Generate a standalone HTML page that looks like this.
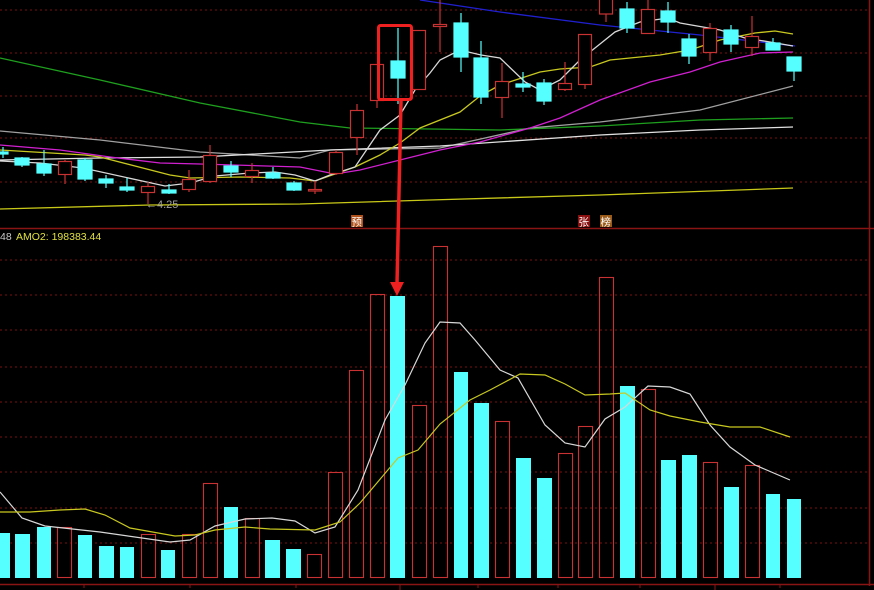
<!DOCTYPE html>
<html><head><meta charset="utf-8"><style>
html,body{margin:0;padding:0;background:#000;width:874px;height:590px;overflow:hidden}
svg{display:block}
text{font-family:"Liberation Sans","Noto Sans CJK SC",sans-serif}
</style></head><body>
<svg width="874" height="590" viewBox="0 0 874 590" xmlns="http://www.w3.org/2000/svg">
<rect width="874" height="590" fill="#000"/>
<g stroke="#7a1010" stroke-width="1" stroke-dasharray="2,3">
<line x1="0" y1="10" x2="868" y2="10"/><line x1="0" y1="53" x2="868" y2="53"/><line x1="0" y1="96" x2="868" y2="96"/><line x1="0" y1="138" x2="868" y2="138"/><line x1="0" y1="182" x2="868" y2="182"/>
<line x1="0" y1="260" x2="868" y2="260"/><line x1="0" y1="295" x2="868" y2="295"/><line x1="0" y1="330" x2="868" y2="330"/><line x1="0" y1="367" x2="868" y2="367"/><line x1="0" y1="402" x2="868" y2="402"/><line x1="0" y1="437" x2="868" y2="437"/><line x1="0" y1="472" x2="868" y2="472"/><line x1="0" y1="508" x2="868" y2="508"/><line x1="0" y1="543" x2="868" y2="543"/>
</g>
<line x1="0" y1="228.5" x2="874" y2="228.5" stroke="#8a1414" stroke-width="1.5"/>
<line x1="869.5" y1="0" x2="869.5" y2="586" stroke="#8a1414" stroke-width="1.5"/>
<line x1="0" y1="584.5" x2="874" y2="584.5" stroke="#8a1414" stroke-width="1.5"/>
<g stroke="#8a1414"><line x1="84" y1="584" x2="84" y2="588"/><line x1="190" y1="584" x2="190" y2="588"/><line x1="296" y1="584" x2="296" y2="588"/><line x1="400" y1="584" x2="400" y2="590"/><line x1="478" y1="584" x2="478" y2="588"/><line x1="558" y1="584" x2="558" y2="588"/><line x1="640" y1="584" x2="640" y2="588"/><line x1="715" y1="584" x2="715" y2="590"/><line x1="780" y1="584" x2="780" y2="588"/></g>

<!-- MA lines top -->
<g fill="none" stroke-width="1.3">
<polyline stroke="#c8c818" points="0,209 150,205 300,204 430,200 600,195 793,188"/>
<polyline stroke="#1ea01e" points="0,58 100,80 200,103 300,122 350,128 430,129 500,130 600,126 700,120 793,118"/>
<polyline stroke="#a0a0a0" points="0,131 100,140 200,152 300,158 330,150 440,148 530,128 600,122 700,110 793,86"/>
<polyline stroke="#e0e0e0" points="0,160 100,158 200,157 330,150 440,146 600,135 700,130 793,127"/>
<polyline stroke="#2020d0" points="420,0 500,12 600,25 700,35 795,46"/>
<polyline stroke="#d020d0" points="0,145 60,150 110,157 160,163 200,164 300,167 335,174 360,170 400,160 440,150 480,142 530,128 560,118 600,100 650,82 690,72 720,62 760,53 793,52"/>
<polyline stroke="#c8c820" points="0,150 85,155 100,157 170,175 190,178 240,177 290,178 315,181 335,174 355,167 380,155 400,143 420,128 460,112 480,96 500,85 540,72 560,69 590,67 610,60 630,58 660,55 690,50 720,40 755,33 775,31 793,34"/>
<polyline stroke="#d8d8d8" points="0,161 40,163 83,168 165,186 190,183 215,176 250,173 275,172 295,175 315,181 330,175 355,167 380,130 400,115 415,90 430,73 440,60 460,50 481,55 500,58 525,82 540,90 560,80 580,60 600,44 615,32 640,22 668,18 680,23 720,30 745,38 770,42 793,46"/>
</g>

<!-- candles -->
<g stroke-width="1.2">
<g stroke="#55ffff" fill="#55ffff">
<line x1="3" y1="147" x2="3" y2="158"/><rect x="0" y="152" width="8" height="2"/>
<line x1="22" y1="157" x2="22" y2="167"/><rect x="15" y="158" width="14" height="7"/>
<line x1="44" y1="150" x2="44" y2="176"/><rect x="37" y="164" width="14" height="9"/>
<line x1="85" y1="158" x2="85" y2="181"/><rect x="78" y="160" width="14" height="19"/>
<line x1="106" y1="175" x2="106" y2="188"/><rect x="99" y="179" width="14" height="4"/>
<line x1="127" y1="178" x2="127" y2="192"/><rect x="120" y="187" width="14" height="3"/>
<line x1="169" y1="184" x2="169" y2="194"/><rect x="162" y="190" width="14" height="3"/>
<line x1="231" y1="161" x2="231" y2="177"/><rect x="224" y="166" width="14" height="6"/>
<line x1="273" y1="167" x2="273" y2="179"/><rect x="266" y="173" width="14" height="5"/>
<line x1="294" y1="181" x2="294" y2="191"/><rect x="287" y="183" width="14" height="7"/>
<line x1="398" y1="28" x2="398" y2="104"/><rect x="391" y="61" width="14" height="17"/>
<line x1="461" y1="13" x2="461" y2="72"/><rect x="454" y="23" width="14" height="34"/>
<line x1="481" y1="41" x2="481" y2="104"/><rect x="474" y="58" width="14" height="39"/>
<line x1="523" y1="72" x2="523" y2="92"/><rect x="516" y="84" width="14" height="3"/>
<line x1="544" y1="79" x2="544" y2="105"/><rect x="537" y="83" width="14" height="18"/>
<line x1="627" y1="2" x2="627" y2="33"/><rect x="620" y="9" width="14" height="19"/>
<line x1="668" y1="2" x2="668" y2="33"/><rect x="661" y="11" width="14" height="11"/>
<line x1="689" y1="34" x2="689" y2="64"/><rect x="682" y="39" width="14" height="17"/>
<line x1="731" y1="25" x2="731" y2="52"/><rect x="724" y="30" width="14" height="14"/>
<line x1="773" y1="38" x2="773" y2="50"/><rect x="766" y="43" width="14" height="7"/>
<line x1="794" y1="57" x2="794" y2="81"/><rect x="787" y="57" width="14" height="14"/>
</g>
<g stroke="#c83232" fill="#000">
<line x1="65" y1="160" x2="65" y2="184"/><rect x="58.5" y="161.5" width="13" height="13"/>
<line x1="148" y1="182" x2="148" y2="204"/><rect x="141.5" y="186.5" width="13" height="6"/>
<line x1="189" y1="170" x2="189" y2="192"/><rect x="182.5" y="179.5" width="13" height="10"/>
<line x1="210" y1="145" x2="210" y2="183"/><rect x="203.5" y="155.5" width="13" height="26"/>
<line x1="252" y1="163" x2="252" y2="183"/><rect x="245.5" y="170.5" width="13" height="6"/>
<line x1="315" y1="181" x2="315" y2="194"/><rect x="308.5" y="189.5" width="13" height="1.5"/>
<line x1="336" y1="150" x2="336" y2="175"/><rect x="329.5" y="152.5" width="13" height="21"/>
<line x1="357" y1="104" x2="357" y2="155"/><rect x="350.5" y="110.5" width="13" height="27"/>
<line x1="377" y1="64" x2="377" y2="108"/><rect x="370.5" y="64.5" width="13" height="36"/>
<rect x="412.5" y="30.5" width="13" height="59"/>
<line x1="440" y1="0" x2="440" y2="52"/><rect x="433.5" y="24.5" width="13" height="2"/>
<line x1="502" y1="63" x2="502" y2="118"/><rect x="495.5" y="81.5" width="13" height="16"/>
<line x1="565" y1="62" x2="565" y2="91"/><rect x="558.5" y="83.5" width="13" height="6"/>
<rect x="578.5" y="34.5" width="13" height="50"/><line x1="585" y1="84" x2="585" y2="89"/>
<line x1="606" y1="0" x2="606" y2="22"/><rect x="599.5" y="-1" width="13" height="15"/>
<line x1="648" y1="0" x2="648" y2="34"/><rect x="641.5" y="9.5" width="13" height="24"/>
<line x1="710" y1="23" x2="710" y2="61"/><rect x="703.5" y="28.5" width="13" height="24"/>
<line x1="752" y1="16" x2="752" y2="56"/><rect x="745.5" y="36.5" width="13" height="11"/>
</g>
</g>
<text x="146" y="208" font-size="11" fill="#a0a0a0">←4.25</text>
<rect x="351" y="215" width="12" height="12" fill="#b0501a"/><text x="351.5" y="225.5" font-size="10.5" fill="#fff">预</text>
<rect x="578" y="215" width="12" height="12" fill="#8a1010"/><text x="578.5" y="225.5" font-size="10.5" fill="#fff">张</text>
<rect x="600" y="215" width="12" height="12" fill="#9a5a18"/><text x="600.5" y="225.5" font-size="10.5" fill="#fff">榜</text>
<text x="0" y="240" font-size="10.5" fill="#c8c8c8">48</text>
<text x="16" y="240" font-size="10.5" fill="#e0e040">AMO2: 198383.44</text>

<!-- volume bars -->
<g fill="#55ffff">
<rect x="0" y="533" width="10" height="45"/><rect x="15" y="534" width="15" height="44"/><rect x="37" y="527" width="14" height="51"/>
<rect x="78" y="535" width="14" height="43"/><rect x="99" y="546" width="15" height="32"/><rect x="120" y="547" width="14" height="31"/>
<rect x="161" y="550" width="14" height="28"/><rect x="224" y="507" width="14" height="71"/><rect x="265" y="540" width="15" height="38"/>
<rect x="286" y="549" width="15" height="29"/><rect x="390" y="296" width="15" height="282"/><rect x="454" y="372" width="14" height="206"/>
<rect x="474" y="403" width="15" height="175"/><rect x="516" y="458" width="15" height="120"/><rect x="537" y="478" width="15" height="100"/>
<rect x="620" y="386" width="15" height="192"/><rect x="661" y="460" width="15" height="118"/><rect x="682" y="455" width="15" height="123"/>
<rect x="724" y="487" width="15" height="91"/><rect x="766" y="494" width="14" height="84"/><rect x="787" y="499" width="14" height="79"/>
</g>
<g fill="none" stroke="#c83232" stroke-width="1.1">
<rect x="57.5" y="527.5" width="14" height="50"/><rect x="141.5" y="534.5" width="14" height="43"/><rect x="182.5" y="534.5" width="14" height="43"/>
<rect x="203.5" y="483.5" width="14" height="94"/><rect x="245.5" y="518.5" width="14" height="59"/><rect x="307.5" y="554.5" width="14" height="23"/>
<rect x="328.5" y="472.5" width="14" height="105"/><rect x="349.5" y="370.5" width="14" height="207"/><rect x="370.5" y="294.5" width="14" height="283"/>
<rect x="412.5" y="405.5" width="14" height="172"/><rect x="433.5" y="246.5" width="14" height="331"/><rect x="495.5" y="421.5" width="14" height="156"/>
<rect x="558.5" y="453.5" width="14" height="124"/><rect x="578.5" y="426.5" width="14" height="151"/><rect x="599.5" y="277.5" width="14" height="300"/>
<rect x="641.5" y="389.5" width="14" height="188"/><rect x="703.5" y="462.5" width="14" height="115"/><rect x="745.5" y="465.5" width="14" height="112"/>
</g>
<g fill="none" stroke-width="1.2">
<polyline stroke="#d8d8d8" points="0,492 22,518 45,526 100,532 170,542 190,540 215,526 245,519 272,518 295,521 315,533 335,527 358,490 385,420 405,385 425,343 440,322 460,323 475,340 500,370 518,378 545,425 565,443 585,447 605,419 625,407 648,386 670,387 690,394 710,425 730,447 755,465 790,480"/>
<polyline stroke="#c8c820" points="0,512 30,512 60,510 85,509 105,515 130,528 175,536 195,535 215,530 245,527 270,529 315,530 340,522 360,503 398,458 418,450 440,424 470,400 490,390 520,374 545,375 565,384 585,395 610,394 625,393 650,410 670,416 700,422 730,427 760,427 790,437"/>
</g>

<!-- highlight & arrow -->
<rect x="378.5" y="25.5" width="33" height="74" rx="2" fill="none" stroke="#ee2020" stroke-width="3"/>
<line x1="401" y1="101" x2="397" y2="284" stroke="#ee2020" stroke-width="3.5"/>
<polygon points="390,282 404,282 397,296" fill="#ee2020"/>
</svg>
</body></html>
